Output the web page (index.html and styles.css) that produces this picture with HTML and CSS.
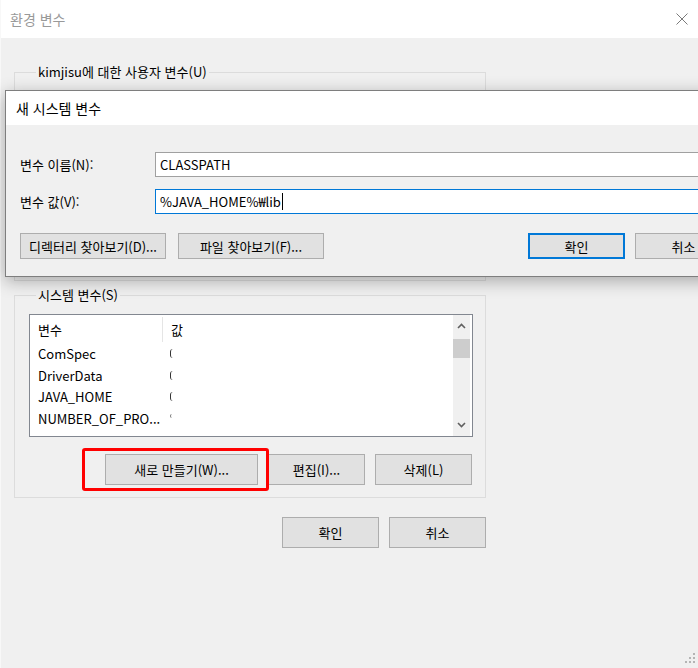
FILE: index.html
```html
<!DOCTYPE html>
<html lang="ko">
<head>
  <meta charset="UTF-8" />
  <title>환경 변수</title>
  <link rel="stylesheet" href="styles.css">
</head>
<body>
  <div class="window">
    <div class="titlebar">
      <span class="title">환경 변수</span>
      <svg class="close" width="12" height="12" viewBox="0 0 12 12">
        <path d="M0.5 0.5 L11.5 11.5 M11.5 0.5 L0.5 11.5" stroke="#7a7a7a" stroke-width="1" fill="none" />
      </svg>
    </div>

    <div class="content">
      <fieldset class="group">
        <legend>kimjisu에 대한 사용자 변수(U)</legend>
        <div class="group-user-body"></div>
      </fieldset>

      <fieldset class="group group-system">
        <legend>시스템 변수(S)</legend>
        <div class="listview">
          <div class="list-table">
            <div class="list-head">
              <span class="col-name">변수</span>
              <span class="col-value">값</span>
            </div>
            <div class="list-row"><span class="col-name">ComSpec</span><span class="col-value"><i class="frag"></i></span></div>
            <div class="list-row"><span class="col-name">DriverData</span><span class="col-value"><i class="frag"></i></span></div>
            <div class="list-row"><span class="col-name">JAVA_HOME</span><span class="col-value"><i class="frag"></i></span></div>
            <div class="list-row"><span class="col-name">NUMBER_OF_PRO...</span><span class="col-value"><i class="frag frag-tick"></i></span></div>
          </div>
          <div class="scrollbar">
            <svg class="arrow" width="9" height="6" viewBox="0 0 9 6"><path d="M1 5 L4.5 1.5 L8 5" stroke="#606060" stroke-width="1.6" fill="none" /></svg>
            <div class="thumb"></div>
            <svg class="arrow arrow-down" width="9" height="6" viewBox="0 0 9 6"><path d="M1 1 L4.5 4.5 L8 1" stroke="#606060" stroke-width="1.6" fill="none" /></svg>
          </div>
        </div>
        <div class="group-actions">
          <span class="highlight"><button class="btn btn-new">새로 만들기(W)...</button></span>
          <button class="btn btn-edit">편집(I)...</button>
          <button class="btn btn-del">삭제(L)</button>
        </div>
      </fieldset>

      <div class="window-actions">
        <button class="btn btn-main">확인</button>
        <button class="btn btn-main">취소</button>
      </div>
    </div>

    <!-- new system variable dialog, on top of the window -->
    <div class="dialog">
      <div class="dialog-title">새 시스템 변수</div>
      <div class="dialog-body">
        <div class="field-grid">
          <label class="field-label">변수 이름(N):</label>
          <div class="field-input">CLASSPATH</div>
          <label class="field-label">변수 값(V):</label>
          <div class="field-input focused">%JAVA_HOME%₩lib<span class="caret"></span></div>
        </div>
        <div class="dialog-actions">
          <button class="btn btn-browse">디렉터리 찾아보기(D)...</button>
          <button class="btn btn-browse">파일 찾아보기(F)...</button>
          <button class="btn btn-dlg btn-default">확인</button>
          <button class="btn btn-dlg">취소</button>
        </div>
      </div>
    </div>

    <svg class="grip" width="10" height="10" viewBox="0 0 10 10" fill="#b4b4b4">
      <rect x="8" y="0" width="2" height="2" />
      <rect x="4" y="4" width="2" height="2" /><rect x="8" y="4" width="2" height="2" />
      <rect x="0" y="8" width="2" height="2" /><rect x="4" y="8" width="2" height="2" /><rect x="8" y="8" width="2" height="2" />
    </svg>
  </div>
</body>
</html>
```

FILE: styles.css
```css
html, body {
  margin: 0;
  height: 100%;
  overflow: hidden;
}
body {
  font-family: 'Noto Sans CJK KR', 'Noto Sans', sans-serif;
  font-size: 13px;
  color: #000;
  background-color: #f0f0f0;
}
.window {
  position: relative;
  height: 668px;
  border-left: 1px solid #f8f8f8;
  box-sizing: border-box;
}
.titlebar {
  height: 38px;
  background: #fff;
  display: flex;
  align-items: center;
  justify-content: space-between;
  padding: 0 10px 0 9px;
}
.title {
  font-size: 14px;
  color: #999;
}
.content {
  padding: 25px 0 0 13px;
  width: 472px;
}
.group {
  margin: 0;
  padding: 0 12px 12px 14px;
  border: 1px solid #dcdcdc;
  min-width: 0;
}
.group legend {
  padding: 0 2px;
  margin-left: 7px;
  line-height: 18px;
}
.group-user-body {
  height: 187px;
}
.group-system {
  margin-top: 5px;
  padding-top: 10px;
}
.listview {
  display: flex;
  height: 123px;
  box-sizing: border-box;
  border: 1px solid #828790;
  background: #fff;
}
.list-table {
  flex: 1;
  padding-top: 1px;
}
.list-head, .list-row {
  display: flex;
  align-items: center;
}
.list-head {
  height: 27px;
}
.list-row {
  height: 21.6px;
}
.col-name {
  width: 124px;
  padding-left: 8px;
  white-space: nowrap;
}
.col-value {
  padding-left: 8px;
  display: flex;
  align-items: center;
}
.list-head .col-value {
  border-left: 1px solid #e5e5e5;
  height: 25px;
  line-height: 25px;
}
.frag {
  display: block;
  width: 3px;
  height: 9px;
  box-sizing: border-box;
  border-left: 1.5px solid #333;
  border-radius: 3px 0 0 3px;
}
.frag-tick {
  height: 4px;
  width: 2px;
  border-left-color: #777;
  margin-bottom: 6px;
}
.scrollbar {
  width: 17px;
  margin-right: 2px;
  background: #f0f0f0;
  display: flex;
  flex-direction: column;
  align-items: center;
  padding-top: 8px;
}
.thumb {
  width: 17px;
  height: 19px;
  background: #cdcdcd;
  margin-top: 10px;
}
.arrow-down {
  margin-top: auto;
  margin-bottom: 8px;
}
.group-actions {
  display: flex;
  justify-content: flex-end;
  gap: 10px;
  margin-top: 17px;
  padding-right: 1px;
}
.btn {
  font-family: inherit;
  font-size: 13px;
  color: #000;
  background: #e1e1e1;
  border: 1px solid #adadad;
  border-radius: 0;
  padding: 0;
  height: 31px;
}
.highlight {
  position: relative;
  display: flex;
}
.highlight::after {
  content: '';
  position: absolute;
  top: -6px;
  bottom: -6px;
  left: -23px;
  right: -11px;
  border: 3px solid #f00;
  border-radius: 3px;
}
.btn-new {
  width: 153px;
}
.btn-edit, .btn-del {
  width: 97px;
}
.window-actions {
  display: flex;
  justify-content: flex-end;
  gap: 10px;
  margin-top: 19px;
}
.btn-main {
  width: 97px;
}
.dialog {
  position: absolute;
  top: 90px;
  left: 4px;
  width: 740px;
  border: 1px solid #7e7e7e;
  box-shadow: 0 4px 16px rgba(0, 0, 0, 0.3);
}
.dialog-title {
  height: 34px;
  line-height: 34px;
  padding-left: 10px;
  background: #fff;
  font-size: 14px;
}
.dialog-body {
  background: #f0f0f0;
  padding: 27px 14px 17px 14px;
}
.field-grid {
  display: grid;
  grid-template-columns: 135px 1fr;
  row-gap: 12px;
  align-items: center;
}
.field-input {
  height: 25px;
  box-sizing: border-box;
  border: 1px solid #a0a0a0;
  background: #fff;
  padding-left: 4px;
  line-height: 23px;
  display: flex;
  align-items: center;
}
.field-input.focused {
  border-color: #0078d7;
}
.caret {
  display: inline-block;
  width: 1px;
  height: 17px;
  background: #000;
  margin-left: 1px;
}
.dialog-actions {
  display: flex;
  gap: 12px;
  margin-top: 19px;
}
.btn-browse {
  width: 146px;
  height: 26px;
}
.btn-dlg {
  width: 97px;
  height: 26px;
}
.btn-default {
  margin-left: auto;
  margin-right: -2px;
  border: 2px solid #0078d7;
}
.grip {
  position: absolute;
  right: 3px;
  bottom: 5px;
}
```
